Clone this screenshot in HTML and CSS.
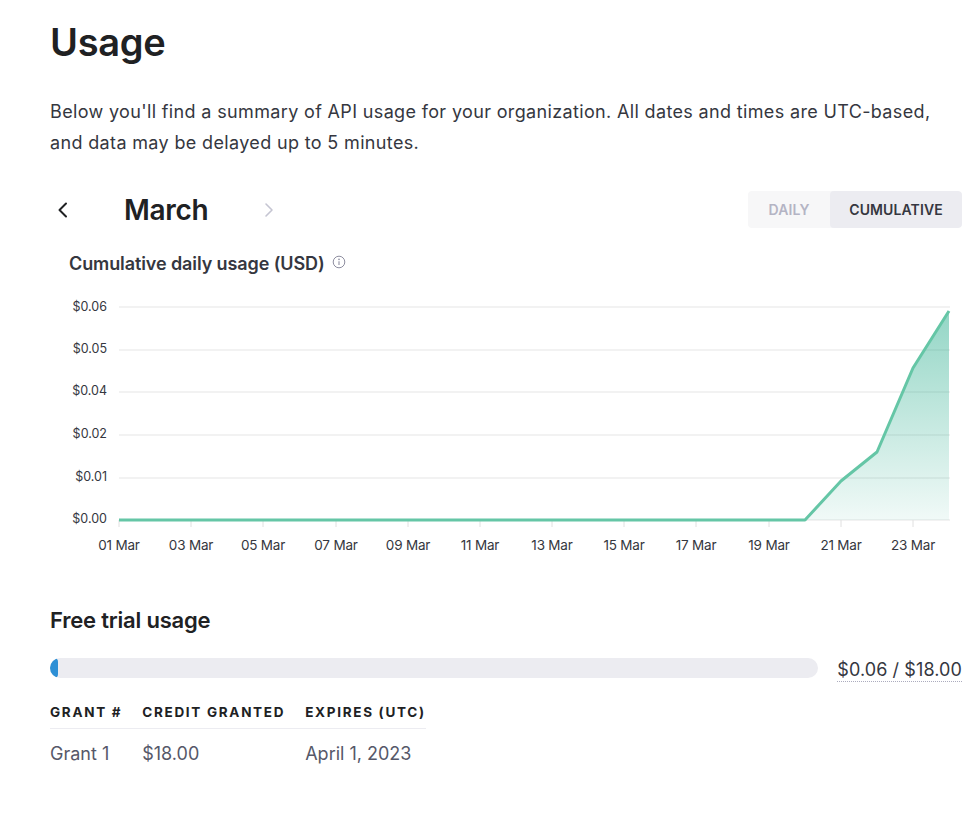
FILE: index.html
```html
<!DOCTYPE html>
<html>
<head>
<meta charset="utf-8">
<link rel="stylesheet" href="styles.css">
</head>
<body>
<main class="page">
  <h1 class="title">Usage</h1>
  <p class="intro">Below you'll find a summary of API usage for your organization. All dates and times are UTC-based, and data may be delayed up to 5 minutes.</p>

  <div class="month-row">
    <div class="month-nav">
      <button class="nav-btn" aria-label="Previous month">
        <svg width="14" height="16" viewBox="0 0 14 16"><polyline points="10,1.5 3.5,8 10,14.5" fill="none" stroke="#202123" stroke-width="2" stroke-linecap="round" stroke-linejoin="round"/></svg>
      </button>
      <span class="month">March</span>
      <button class="nav-btn disabled" aria-label="Next month">
        <svg width="14" height="16" viewBox="0 0 14 16"><polyline points="4,2 10,8 4,14" fill="none" stroke="#c5c5d2" stroke-width="1.6" stroke-linecap="round" stroke-linejoin="round"/></svg>
      </button>
    </div>
    <div class="toggle">
      <span class="seg">DAILY</span>
      <span class="seg active">CUMULATIVE</span>
    </div>
  </div>

  <div class="chart-title">
    <span>Cumulative daily usage (USD)</span>
    <svg class="info" width="14" height="14" viewBox="0 0 14 14"><circle cx="7" cy="7" r="5.8" fill="none" stroke="#8e8ea0" stroke-width="1"/><circle cx="7" cy="4.4" r="0.8" fill="#8e8ea0"/><line x1="7" y1="6.3" x2="7" y2="10" stroke="#8e8ea0" stroke-width="1.1"/></svg>
  </div>

  <svg class="chart" width="912" height="270" viewBox="0 0 912 270">
    <defs>
      <linearGradient id="fillg" x1="0" y1="0" x2="0" y2="1">
        <stop offset="0" stop-color="#10a37f" stop-opacity="0.45"/>
        <stop offset="1" stop-color="#10a37f" stop-opacity="0.06"/>
      </linearGradient>
    </defs>
    <g class="grid">
      <line x1="69" y1="17" x2="900" y2="17"/>
      <line x1="69" y1="60" x2="900" y2="60"/>
      <line x1="69" y1="102" x2="900" y2="102"/>
      <line x1="69" y1="145" x2="900" y2="145"/>
      <line x1="69" y1="188" x2="900" y2="188"/>
      <line x1="69" y1="230" x2="900" y2="230"/>
    </g>
    <g class="ticks">
      <line x1="69" y1="230" x2="69" y2="237"/>
      <line x1="141" y1="230" x2="141" y2="237"/>
      <line x1="213" y1="230" x2="213" y2="237"/>
      <line x1="286" y1="230" x2="286" y2="237"/>
      <line x1="358" y1="230" x2="358" y2="237"/>
      <line x1="430" y1="230" x2="430" y2="237"/>
      <line x1="502" y1="230" x2="502" y2="237"/>
      <line x1="574" y1="230" x2="574" y2="237"/>
      <line x1="646" y1="230" x2="646" y2="237"/>
      <line x1="719" y1="230" x2="719" y2="237"/>
      <line x1="791" y1="230" x2="791" y2="237"/>
      <line x1="863" y1="230" x2="863" y2="237"/>
    </g>
    <g class="ylabels">
      <text x="57" y="21">$0.06</text>
      <text x="57" y="63">$0.05</text>
      <text x="57" y="105">$0.04</text>
      <text x="57" y="148">$0.02</text>
      <text x="57" y="191">$0.01</text>
      <text x="57" y="233">$0.00</text>
    </g>
    <g class="xlabels">
      <text x="69" y="260">01 Mar</text>
      <text x="141" y="260">03 Mar</text>
      <text x="213" y="260">05 Mar</text>
      <text x="286" y="260">07 Mar</text>
      <text x="358" y="260">09 Mar</text>
      <text x="430" y="260">11 Mar</text>
      <text x="502" y="260">13 Mar</text>
      <text x="574" y="260">15 Mar</text>
      <text x="646" y="260">17 Mar</text>
      <text x="719" y="260">19 Mar</text>
      <text x="791" y="260">21 Mar</text>
      <text x="863" y="260">23 Mar</text>
    </g>
    <polygon points="69,230 755,230 791,191 827,162 863,78 899,21 899,230" fill="url(#fillg)"/>
    <polyline points="69,230 755,230 791,191 827,162 863,78 899,21" fill="none" stroke="#65c6a6" stroke-width="3" stroke-linejoin="round"/>
  </svg>

  <h2 class="section-title">Free trial usage</h2>
  <div class="progress-row">
    <div class="progress"><div class="progress-fill" style="width: 8px"></div></div>
    <span class="amount">$0.06 / $18.00</span>
  </div>

  <table class="grants">
    <thead>
      <tr><th>GRANT #</th><th>CREDIT GRANTED</th><th>EXPIRES (UTC)</th></tr>
    </thead>
    <tbody>
      <tr><td>Grant 1</td><td>$18.00</td><td>April 1, 2023</td></tr>
    </tbody>
  </table>
</main>
</body>
</html>
```

FILE: styles.css
```css
* { box-sizing: border-box; }
html, body { margin: 0; padding: 0; background: #fff; }
body {
  font-family: Inter, "Noto Sans", sans-serif;
  color: #353740;
}
.page {
  width: 912px;
  margin-left: 50px;
  padding-top: 19px;
}
.title {
  margin: 0;
  font-size: 38px;
  line-height: 46px;
  font-weight: 600;
  color: #202123;
  letter-spacing: -0.3px;
}
.intro {
  margin: 31px 0 0;
  font-size: 18px;
  line-height: 31px;
  letter-spacing: 0.35px;
  color: #353740;
  width: 895px;
}
.month-row {
  margin-top: 33px;
  display: flex;
  align-items: center;
  justify-content: space-between;
}
.month-nav {
  display: flex;
  align-items: center;
}
.nav-btn {
  border: 0;
  background: none;
  padding: 0;
  width: 26px;
  height: 26px;
  display: flex;
  align-items: center;
  justify-content: center;
}
.month {
  font-size: 28px;
  font-weight: 600;
  color: #202123;
  margin: 0 48px 0 48px;
  letter-spacing: -0.3px;
}
.toggle {
  display: flex;
  height: 37px;
  border-radius: 4px;
  overflow: hidden;
  background: #f7f7f8;
}
.seg {
  display: flex;
  align-items: center;
  justify-content: center;
  font-size: 14px;
  font-weight: 600;
  color: #b4b4c4;
  letter-spacing: 0.1px;
}
.seg:first-child { width: 82px; }
.seg.active {
  width: 132px;
  background: #ececf1;
  color: #353740;
  border-radius: 4px;
}
.chart-title {
  margin: 22px 0 0 19px;
  display: flex;
  align-items: center;
  gap: 7px;
  font-size: 18px;
  font-weight: 600;
  color: #353740;
  height: 26px;
}
.chart-title span { letter-spacing: -0.1px; }
.info { margin-top: -3px; }
.chart {
  display: block;
  margin-top: 14px;
  overflow: visible;
}
.grid line { stroke: #e5e5e5; stroke-width: 1; }
.ticks line { stroke: #e0e0e0; stroke-width: 1; }
.ylabels text {
  font-family: Inter, sans-serif;
  font-size: 12.5px;
  fill: #353740;
  text-anchor: end;
}
.xlabels text {
  font-family: Inter, sans-serif;
  font-size: 13.5px;
  fill: #353740;
  text-anchor: middle;
  letter-spacing: -0.2px;
}
.section-title {
  margin: 45px 0 0;
  font-size: 22px;
  line-height: 30px;
  font-weight: 600;
  color: #202123;
  letter-spacing: -0.2px;
}
.progress-row {
  margin-top: 18px;
  display: flex;
  align-items: center;
  justify-content: space-between;
}
.progress {
  width: 768px;
  height: 20px;
  border-radius: 10px;
  background: #ececf1;
  overflow: hidden;
}
.progress-fill {
  height: 100%;
  background: #2d8fd5;
  border-radius: 4px;
}
.amount {
  font-size: 18px;
  color: #353740;
  border-bottom: 1px dotted #acacbe;
  padding-bottom: 1px;
  margin-top: 6px;
  letter-spacing: 0.1px;
}
.grants {
  margin-top: 18px;
  border-collapse: collapse;
}
.grants th {
  text-align: left;
  font-size: 13.5px;
  font-weight: 700;
  letter-spacing: 1.7px;
  color: #202123;
  padding: 4px 20px 8px 0;
  border-bottom: 1px solid #ececf1;
  white-space: nowrap;
}
.grants th:last-child, .grants td:last-child { padding-right: 0; }
.grants td {
  font-size: 18px;
  color: #565869;
  padding: 14px 20px 0 0;
  letter-spacing: 0;
  white-space: nowrap;
}
```
